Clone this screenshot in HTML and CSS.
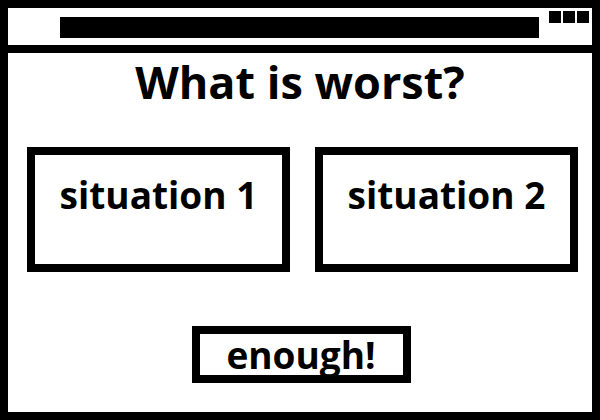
FILE: index.html
```html
<!DOCTYPE html>
<html lang="en">
  <head>
    <meta charset="UTF-8" />
    <title>What is worst?</title>
    <link rel="stylesheet" href="styles.css">
  </head>
  <body>
    <div class="window">
      <div class="title-bar">
        <div class="address"></div>
        <div class="controls">
          <span></span>
          <span></span>
          <span></span>
        </div>
      </div>
      <div class="content">
        <h1>What is worst?</h1>
        <div class="choices">
          <button type="button" class="choice">situation 1</button>
          <button type="button" class="choice">situation 2</button>
        </div>
        <div class="button-container">
          <button type="button" class="enough">enough!</button>
        </div>
      </div>
    </div>
  </body>
</html>
```

FILE: styles.css
```css
body {
  margin: 0;
  font-family: "Open Sans", "Noto Sans", sans-serif;
  background: #fff;
}
.window {
  width: 600px;
  height: 420px;
  box-sizing: border-box;
  border: 8px solid #000;
  display: flex;
  flex-direction: column;
}
.title-bar {
  height: 37px;
  border-bottom: 8px solid #000;
  display: flex;
  align-items: flex-start;
  padding-left: 52px;
}
.address {
  width: 479px;
  height: 21px;
  margin-top: 9px;
  background: #000;
}
.controls {
  display: flex;
  gap: 2px;
  margin-top: 3px;
  margin-left: 10px;
}
.controls span {
  width: 12px;
  height: 12px;
  background: #000;
}
.content {
  flex: 1;
  display: flex;
  flex-direction: column;
}
h1 {
  margin: 0;
  height: 94px;
  padding-top: 2px;
  box-sizing: border-box;
  text-align: center;
  font-size: 45px;
  line-height: 54px;
  font-weight: 700;
}
.choices {
  display: flex;
  gap: 25px;
  padding-left: 19px;
}
button {
  font-family: inherit;
  font-weight: 700;
  color: #000;
  background: #fff;
  border: 8px solid #000;
  padding: 0;
  cursor: pointer;
}
.choice {
  width: 263px;
  height: 125px;
  font-size: 37px;
  padding-bottom: 30px;
}
.button-container {
  display: flex;
  justify-content: center;
  padding-top: 54px;
  padding-left: 2px;
}
.enough {
  width: 219px;
  height: 57px;
  font-size: 37px;
  line-height: 1;
}
```
